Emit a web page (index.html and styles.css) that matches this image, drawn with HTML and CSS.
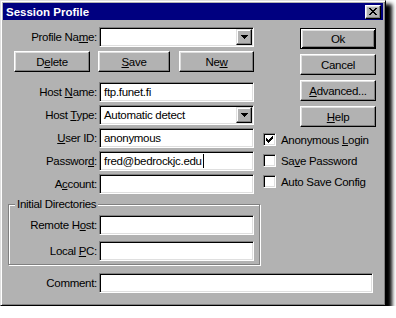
FILE: index.html
```html
<!DOCTYPE html>
<html>
<head>
<meta charset="utf-8">
<link rel="stylesheet" href="styles.css">
</head>
<body>
<div class="win">
  <div class="titlebar">
    <span class="title">Session Profile</span>
    <span class="close"><svg width="8" height="7" viewBox="0 0 8 7"><path d="M0 0h2v1h-2zM6 0h2v1h-2zM1 1h2v1h-2zM5 1h2v1h-2zM2 2h4v1h-4zM3 3h2v1h-2zM2 4h4v1h-4zM1 5h2v1h-2zM5 5h2v1h-2zM0 6h2v1h-2zM6 6h2v1h-2z" fill="#000"/></svg></span>
  </div>
  <div class="content">
    <div class="top">
      <div class="left">
        <div class="row first"><span class="lbl">Profile Na<u>m</u>e:</span><div class="field select"><span class="arrow"><svg width="7" height="4" viewBox="0 0 7 4"><path d="M0 0h7v1h-7zM1 1h5v1h-5zM2 2h3v1h-3zM3 3h1v1h-1z" fill="#000"/></svg></span></div></div>
        <div class="btnrow">
          <span class="btn b-del"><span>D<u>e</u>lete</span></span>
          <span class="btn b-save"><span><u>S</u>ave</span></span>
          <span class="btn b-new"><span>Ne<u>w</u></span></span>
        </div>
        <div class="row host"><span class="lbl">Host <u>N</u>ame:</span><div class="field">ftp.funet.fi</div></div>
        <div class="row"><span class="lbl">Host <u>T</u>ype:</span><div class="field select"><span>Automatic detect</span><span class="arrow"><svg width="7" height="4" viewBox="0 0 7 4"><path d="M0 0h7v1h-7zM1 1h5v1h-5zM2 2h3v1h-3zM3 3h1v1h-1z" fill="#000"/></svg></span></div></div>
        <div class="row"><span class="lbl"><u>U</u>ser ID:</span><div class="field">anonymous</div></div>
        <div class="row"><span class="lbl">Passwor<u>d</u>:</span><div class="field"><span>fred@bedrockjc.edu</span><span class="caret"></span></div></div>
        <div class="row"><span class="lbl">A<u>c</u>count:</span><div class="field"></div></div>
        <fieldset class="group">
          <legend>Initial Directories</legend>
          <div class="row g1"><span class="lbl glbl">Remote H<u>o</u>st:</span><div class="field"></div></div>
          <div class="row g2"><span class="lbl glbl">Local <u>P</u>C:</span><div class="field"></div></div>
        </fieldset>
      </div>
      <div class="right">
        <div class="btns">
          <span class="btn rbtn default">Ok</span>
          <span class="btn rbtn">Cancel</span>
          <span class="btn rbtn"><span><u>A</u>dvanced...</span></span>
          <span class="btn rbtn"><span><u>H</u>elp</span></span>
        </div>
        <div class="checks">
          <div class="chk"><span class="cb"><svg width="11" height="11" viewBox="0 0 11 11"><path d="M2 4h1v3h-1zM3 5h1v3h-1zM4 6h1v3h-1zM5 5h1v3h-1zM6 4h1v3h-1zM7 3h1v3h-1zM8 2h1v3h-1z" fill="#000"/></svg></span><span>Anonymous <u>L</u>ogin</span></div>
          <div class="chk"><span class="cb"></span><span>Sa<u>v</u>e Password</span></div>
          <div class="chk"><span class="cb"></span><span>Auto Save Config</span></div>
        </div>
      </div>
    </div>
    <div class="row comment"><span class="lbl">Comment:</span><div class="field wide"></div></div>
  </div>
</div>
</body>
</html>
```
FILE: styles.css
```css
* { box-sizing: border-box; }
body {
  margin: 0;
  background: #fff;
  font-family: "Liberation Sans", Arial, sans-serif;
  font-size: 11.5px;
  letter-spacing: -0.3px;
  color: #000;
}
u { text-decoration: underline; text-underline-offset: 1px; }
.win {
  width: 386px;
  height: 306px;
  background: #b2b2b2;
  border: 1px solid;
  border-color: #dfdfdf #000 #000 #dfdfdf;
  box-shadow: inset 1px 1px #fff, inset -1px -1px #808080, 5px 5px 4px 1px #000;
  padding: 2px;
}
.titlebar {
  height: 17px;
  background: #000080;
  display: flex;
  align-items: center;
  justify-content: space-between;
  padding: 0 2px 0 3px;
  color: #fff;
  font-weight: bold;
  font-size: 11.5px;
  letter-spacing: 0;
}
.close {
  width: 16px;
  height: 14px;
  background: #b2b2b2;
  border: 1px solid;
  border-color: #fff #000 #000 #fff;
  box-shadow: inset -1px -1px #808080, inset 1px 1px #dfdfdf;
  display: flex;
  align-items: center;
  justify-content: center;
}
.close svg { display: block; }
.content { padding: 7px 0 0 5px; }
.top { display: flex; gap: 3px; }
.left { width: 252px; }
.right { width: 113px; padding-top: 1px; }
.row {
  display: flex;
  align-items: center;
  height: 20px;
  margin-top: 3px;
}
.row.first { margin-top: 0; }
.row.host { margin-top: 10px; }
.lbl {
  width: 89px;
  text-align: right;
  margin-right: 2px;
  white-space: nowrap;
}
.glbl { width: 88px; }
.field {
  width: 155px;
  height: 20px;
  background: #fff;
  border: 1px solid;
  border-color: #808080 #fff #fff #808080;
  box-shadow: inset 1px 1px #000, inset -1px -1px #dfdfdf;
  padding: 0 1px 0 4px;
  display: flex;
  align-items: center;
  white-space: nowrap;
}
.field.wide { width: 274px; }
.arrow {
  width: 16px;
  height: 16px;
  margin-left: auto;
  background: #b2b2b2;
  border: 1px solid;
  border-color: #dfdfdf #000 #000 #dfdfdf;
  box-shadow: inset -1px -1px #808080, inset 1px 1px #fff;
  display: flex;
  align-items: center;
  justify-content: center;
}
.arrow svg { display: block; }
.caret {
  display: inline-block;
  width: 1px;
  height: 14px;
  background: #000;
  margin-left: 1px;
}
.btnrow {
  display: flex;
  height: 21px;
  margin-top: 4px;
  padding-left: 6px;
}
.btn {
  display: flex;
  align-items: center;
  justify-content: center;
  height: 21px;
  background: #b2b2b2;
  border: 1px solid;
  border-color: #fff #000 #000 #fff;
  box-shadow: inset -1px -1px #808080, inset 1px 1px #dfdfdf;
  white-space: nowrap;
}
.b-del { width: 76px; }
.b-save { width: 72px; margin-left: 8px; }
.b-new { width: 75px; margin-left: 9px; }
.btns {
  display: flex;
  flex-direction: column;
  align-items: flex-end;
  gap: 5px;
}
.rbtn { width: 76px; }
.btn.default {
  border-color: #000;
  box-shadow: inset 1px 1px #fff, inset -1px -1px #000, inset 2px 2px #dfdfdf, inset -2px -2px #808080;
}
.checks { margin-top: 2px; }
.chk {
  display: flex;
  align-items: center;
  height: 21px;
  white-space: nowrap;
}
.cb {
  width: 13px;
  height: 13px;
  background: #fff;
  border: 1px solid;
  border-color: #808080 #fff #fff #808080;
  box-shadow: inset 1px 1px #000, inset -1px -1px #dfdfdf;
  margin-right: 5px;
  flex: none;
}
.cb svg { display: block; }
.group {
  width: 252px;
  margin: 4px 0 0 0;
  padding: 0 0 3px 0;
  min-width: 0;
  border: 1px solid #808080;
  box-shadow: inset 1px 1px #fff, 1px 1px #fff;
}
.group legend {
  margin-left: 6px;
  padding: 0 2px;
  line-height: 13px;
  background: #b2b2b2;
}
.row.g1 { margin-top: 4px; }
.row.g2 { margin-top: 6px; }
.row.comment { margin-top: 8px; }
```
